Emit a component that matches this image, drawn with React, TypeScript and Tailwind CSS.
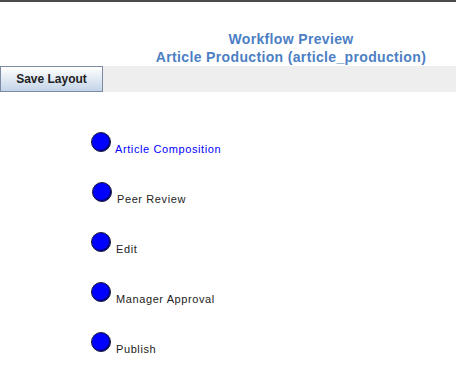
const font = { fontFamily: '"Liberation Sans", Arial, sans-serif' };

const steps = [
  { label: "Article Composition", active: true, shift: false },
  { label: "Peer Review", active: false, shift: true },
  { label: "Edit", active: false, shift: false },
  { label: "Manager Approval", active: false, shift: false },
  { label: "Publish", active: false, shift: false },
];

function StepNode({
  label,
  active,
  shift,
}: {
  label: string;
  active: boolean;
  shift: boolean;
}) {
  return (
    <div className={shift ? "flex h-[50px] items-start pl-[92px]" : "flex h-[50px] items-start pl-[91px]"}>
      <div className="h-[20px] w-[20px] shrink-0 rounded-full border border-[#1c1c2e] bg-[#0000ff] shadow-[inset_-1px_-1px_1px_rgba(0,0,0,0.55)]" />
      <span
        className={
          active
            ? "ml-[4px] mt-[11px] text-[11px] leading-[13px] tracking-[0.6px] text-[#0000ff]"
            : "ml-[5px] mt-[11px] text-[11px] leading-[13px] tracking-[0.6px] text-[#222222]"
        }
      >
        {label}
      </span>
    </div>
  );
}

export default function App() {
  return (
    <div className="h-[385px] w-[456px] overflow-hidden bg-white" style={font}>
      <div className="h-[2px] w-full bg-[#4b4b4b]" />
      <div className="pl-[126px] pt-[28px] text-center text-[14px] font-bold leading-[18px] tracking-[0.35px] text-[#4d7fc4]">
        <div>Workflow Preview</div>
        <div>Article Production (article_production)</div>
      </div>
      <div className="flex h-[26px] w-full bg-[#eeeeee]">
        <button
          type="button"
          className="h-[26px] w-[103px] border border-[#7a8ba3] bg-gradient-to-b from-white to-[#c3d4e7] text-[12px] font-bold text-[#222222]"
        >
          Save Layout
        </button>
      </div>
      <div className="flex flex-col pt-[40px]">
        {steps.map((step) => (
          <StepNode key={step.label} {...step} />
        ))}
      </div>
    </div>
  );
}
